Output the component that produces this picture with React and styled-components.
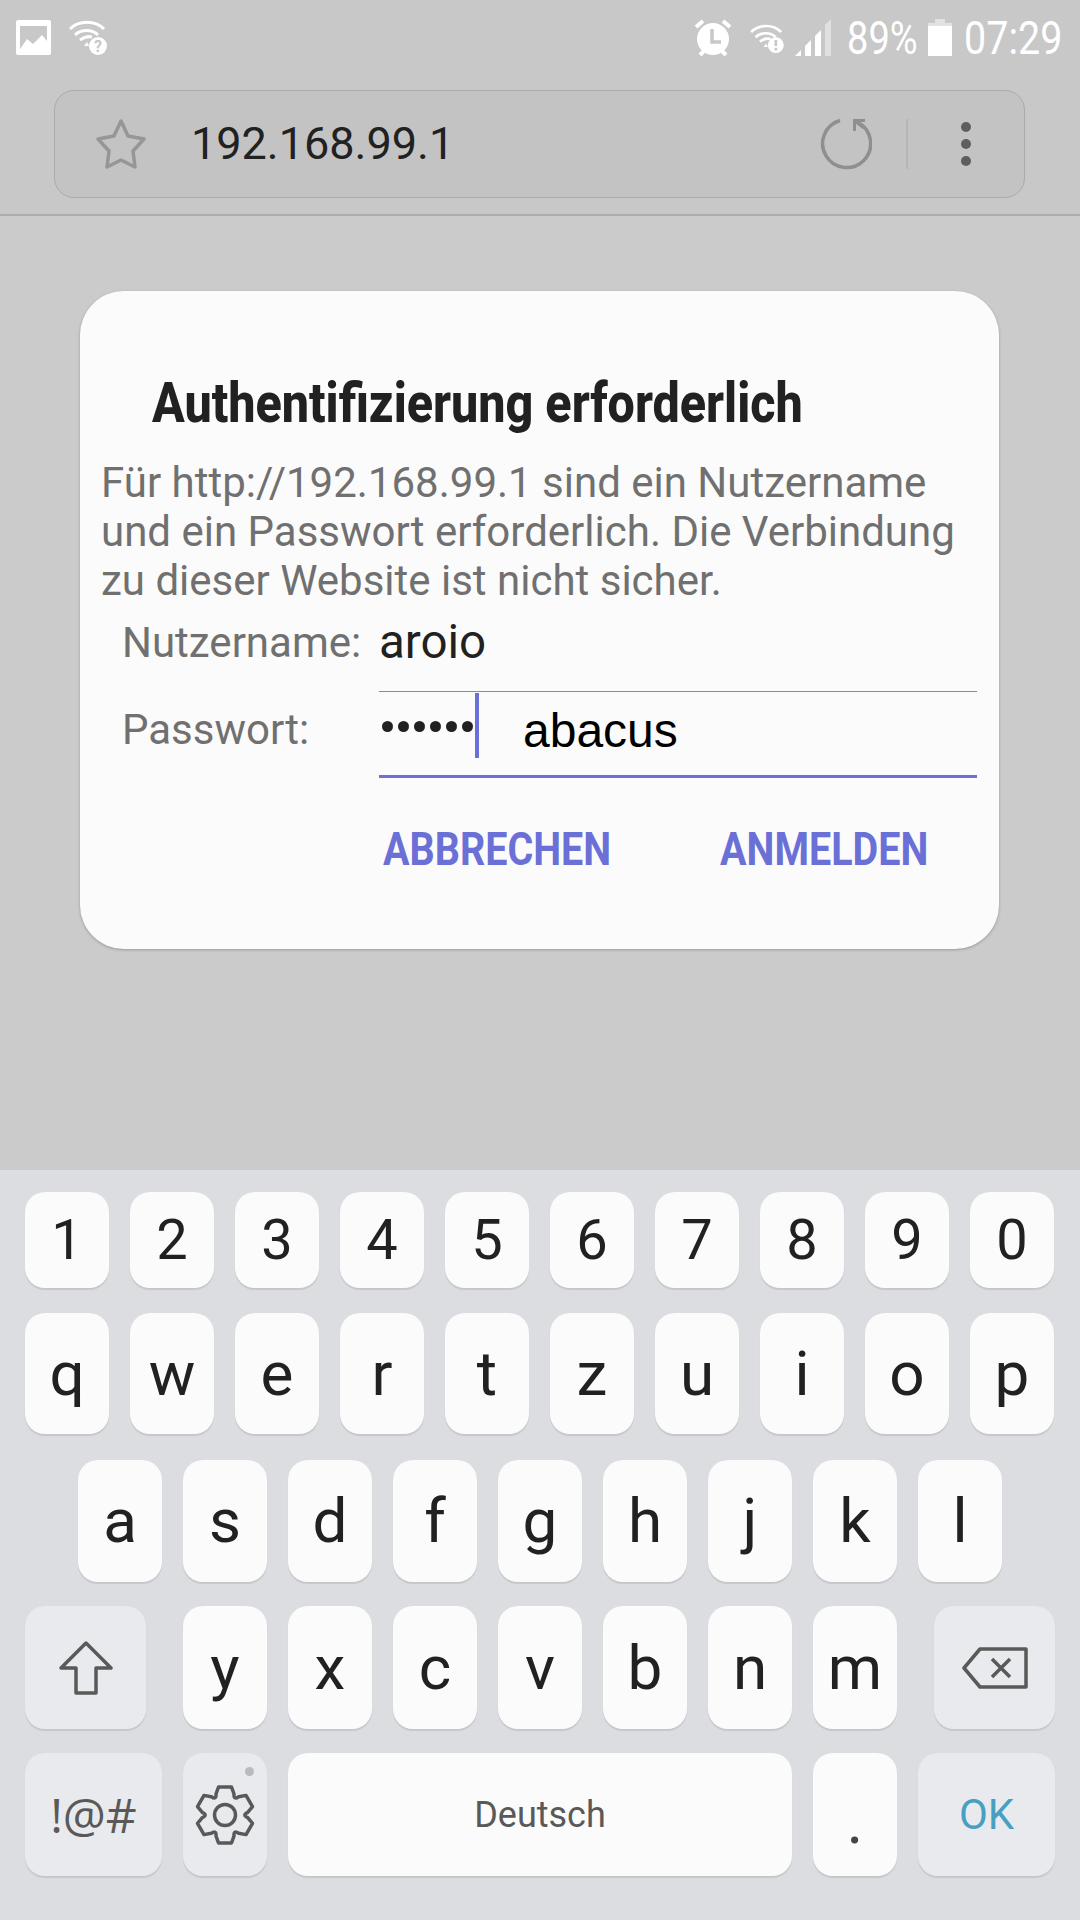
import React from "react";
import styled, { createGlobalStyle } from "styled-components";

const Global = createGlobalStyle`
  html, body { margin: 0; padding: 0; background: #cbcbcb; }
  * { box-sizing: border-box; }
`;

const Screen = styled.div`
  width: 1080px; height: 1920px; display: flex; flex-direction: column;
  background: #cbcbcb; font-family: Roboto, "Liberation Sans", sans-serif; overflow: hidden;
`;
const TopArea = styled.header`
  height: 216px; flex: none; background: #c8c8c8; border-bottom: 2px solid #adadad;
  display: flex; flex-direction: column;
`;
const StatusBar = styled.div`
  height: 90px; display: flex; align-items: flex-start; padding: 19px 20px 0 16px; color: #fff;
`;
const StatusIcon = styled.svg`
  flex: none; margin-left: ${p => p.$ml || 0}px; margin-top: ${p => p.$mt || 0}px; display: block;
`;
const Spacer = styled.div` flex: 1; `;
const StatusText = styled.span`
  flex: none; width: ${p => p.$w}px; margin-left: ${p => p.$ml}px; font-size: 47px; line-height: 38px;
  font-weight: 400; white-space: nowrap; transform: scaleX(${p => p.$sx}); transform-origin: left center; color: #fff;
`;
const UrlBar = styled.div`
  margin-left: 54px; width: 971px; height: 108px; background: #c3c3c3; border: 1.5px solid #ababab;
  border-radius: 20px; display: flex; align-items: center; padding-left: 40px;
`;
const UrlText = styled.span`
  margin-left: 44px; font-size: 45px; color: #212121; flex: 1; line-height: 50px;
`;
const Divider = styled.div`
  width: 2px; height: 50px; margin: 0 52px 0 34px; background: #b6b6b6;
`;
const MoreGap = styled.div`
  flex: none; width: 52px;
`;
const Backdrop = styled.main`
  flex: 1; display: flex; align-items: flex-start; padding: 75px 0 0 80px;
`;
const Dialog = styled.section`
  width: 919px; height: 658px; background: #fbfbfb; border-radius: 44px;
  box-shadow: 0 1px 3px rgba(0,0,0,.25); padding: 87px 22px 0 22px; display: flex; flex-direction: column;
`;
const Title = styled.h1`
  margin: 0 0 0 50px; font-size: 56px; line-height: 50px; font-weight: 800; color: #212121;
  white-space: nowrap; transform: scaleX(.865); transform-origin: left center;
`;
const Message = styled.p`
  margin: 30px 0 0 -1px; font-size: 42px; line-height: 49px; color: #707070; white-space: nowrap;
`;
const FieldRow = styled.div`
  display: grid; grid-template-columns: 277px 1fr; height: ${p => p.$h}px; align-items: start;
`;
const FieldLabel = styled.span`
  padding-left: 20px; font-size: 42px; line-height: 48px; color: #707070; margin-top: ${p => p.$mt}px; white-space: nowrap;
`;
const FieldInput = styled.div`
  height: 100%; border-bottom: ${p => p.$focus ? "3px solid #6a70d6" : "1px solid #8c8c8c"};
  display: flex; align-items: flex-start; font-size: 47.5px; color: #212121;
`;
const FieldValue = styled.span`
  margin-top: 11px; line-height: 52px;
`;
const Dots = styled.div`
  display: flex; gap: 5px; margin: 29px 0 0 3px; width: 93px;
`;
const Dot = styled.i`
  width: 11px; height: 11px; border-radius: 50%; background: #212121; display: block;
`;
const Caret = styled.div`
  width: 4px; height: 65px; background: #6a70d6; margin-top: 1px; flex: none;
`;
const Hint = styled.span`
  margin: 11px 0 0 44px; font-family: "Liberation Sans", Arial, sans-serif; font-size: 48px; line-height: 56px; color: #000;
`;
const Actions = styled.div`
  display: flex; margin-top: 46px; padding-left: 281px;
`;
const Action = styled.button`
  width: ${p => p.$w}px; flex: none; padding: 0; border: 0; background: none; text-align: left; font-family: inherit;
  font-size: 47px; line-height: 50px; font-weight: 700; color: #6a70d6; white-space: nowrap;
  transform: scaleX(.84); transform-origin: left center;
`;
const Keyboard = styled.section`
  height: 750px; flex: none; background: #dcdde1; padding: 22px 25px 0; display: flex; flex-direction: column;
`;
const Row = styled.div`
  display: flex; gap: 21px; height: ${p => p.$h}px; margin-bottom: ${p => p.$mb}px; padding-left: ${p => p.$pl || 0}px;
`;
const Key = styled.div`
  flex: none; width: ${p => p.$w || 84}px; height: 100%; border-radius: 20px; display: flex; align-items: center;
  justify-content: center; position: relative; background: ${p => p.$special ? "#e9eaee" : "#fbfbfb"};
  box-shadow: 0 1.5px 1px rgba(0,0,0,.1); color: #212121; font-size: ${p => p.$fs || 62}px; line-height: 1;
  margin-left: ${p => p.$ml || 0}px;
`;
const KeyLabel = styled.span`
  font-size: ${p => p.$fs}px; color: ${p => p.$color}; padding-top: ${p => p.$pt || 0}px; font-weight: 400;
  font-family: ${p => p.$font || "inherit"};
`;
const Badge = styled.i`
  position: absolute; top: 14px; right: 13px; width: 9px; height: 9px; border-radius: 50%; background: #b9babd;
`;
const PlainIcon = styled.svg`
  flex: none; display: block;
`;

const gear = (() => {
  const at = (deg, r, d) => {
    const a = deg * Math.PI / 180;
    return `${(30 + r * Math.cos(a) - d * Math.sin(a)).toFixed(1)} ${(30 + r * Math.sin(a) + d * Math.cos(a)).toFixed(1)}`;
  };
  let out = "";
  for (let i = 0; i < 6; i++) {
    const deg = i * 60 - 90;
    out += `${i ? "L" : "M"}${at(deg, 21, -9)} L${at(deg, 28, -6.5)} L${at(deg, 28, 6.5)} L${at(deg, 21, 9)} Q${at(deg + 30, 17, 0)} ${at(deg + 60, 21, -9)} `;
  }
  return out + "Z";
})();

const ImageIcon = () => (
  <StatusIcon width="35" height="35" viewBox="0 0 35 35" $mt="1">
    <path fillRule="evenodd" fill="#fff" d="M2 0h31a2 2 0 0 1 2 2v31a2 2 0 0 1-2 2H2a2 2 0 0 1-2-2V2a2 2 0 0 1 2-2Zm2 6v23l7-10 6 5 9-9 5 6V6Z" />
    <path fill="#fff" d="M4 4h27v2H4z" />
  </StatusIcon>
);
const WifiArcs = () => (
  <g fill="none" stroke="#fff" strokeWidth="3" strokeLinecap="butt">
    <path d="M1 9C10 0 26 0 35 9" />
    <path d="M6 15c6-6 17-6 23 0" />
    <path d="M11 20c4-3 8-4 12-3" />
    <path d="M15 26l3-4 2 4Z" fill="#fff" stroke="none" />
  </g>
);
const WifiQ = () => (
  <StatusIcon width="38" height="36" viewBox="0 0 38 36" $ml="18" $mt="1">
    <WifiArcs />
    <circle cx="29" cy="26" r="9" fill="#fff" />
    <text x="29" y="32" textAnchor="middle" fontSize="16" fontWeight="700" fontFamily="Roboto" fill="#c8c8c8">?</text>
  </StatusIcon>
);
const AlarmIcon = () => (
  <StatusIcon width="38" height="38" viewBox="0 0 38 38">
    <circle cx="19" cy="20" r="16" fill="#fff" />
    <path d="M2 8l7-6M36 8l-7-6M6 36l4-4M32 36l-4-4" stroke="#fff" strokeWidth="4" />
    <path d="M18 10v13h9" fill="none" stroke="#c8c8c8" strokeWidth="3.5" />
  </StatusIcon>
);
const WifiAlert = () => (
  <StatusIcon width="34" height="30" viewBox="0 0 38 34" $ml="18" $mt="5">
    <WifiArcs />
    <circle cx="29" cy="24" r="9" fill="#fff" />
    <path d="M29 18v7M29 27v3" stroke="#c8c8c8" strokeWidth="3" />
  </StatusIcon>
);
const SignalIcon = () => (
  <StatusIcon width="37" height="37" viewBox="0 0 37 37" $ml="11">
    <path d="M0 37l6-6v6Z" fill="#fff" />
    <path d="M10 37V27l6-6v16Z" fill="#fff" />
    <path d="M20 37V17l6-6v26Z" fill="#fff" />
    <path d="M30 37V6l6-6v37Z" fill="#e0e0e0" />
  </StatusIcon>
);
const BatteryIcon = () => (
  <StatusIcon width="24" height="37" viewBox="0 0 24 37" $ml="10">
    <path d="M7 0h10v4H7z" fill="#e2e2e2" />
    <path d="M0 4h24v3H0z" fill="#e2e2e2" />
    <path d="M0 7h24v30H0z" fill="#fff" />
  </StatusIcon>
);
const StarIcon = () => (
  <PlainIcon width="52" height="52" viewBox="0 0 52 52">
    <path d="M26 3l7 15 16 3-11 12 2 16-14-7-14 7 2-16L3 21l16-3Z" fill="none" stroke="#969696" strokeWidth="3.5" strokeLinejoin="round" />
  </PlainIcon>
);
const ReloadIcon = () => (
  <PlainIcon width="52" height="52" viewBox="0 0 52 52">
    <path d="M20 2.5A24 24 0 1 0 39 5" fill="none" stroke="#8f8f8f" strokeWidth="3.5" />
    <path d="M33 1h12v3h-9v9h-3Z" fill="#8f8f8f" />
    <path d="M35 3l9 7" stroke="#8f8f8f" strokeWidth="3" />
  </PlainIcon>
);
const MoreIcon = () => (
  <PlainIcon width="12" height="46" viewBox="0 0 12 46">
    <circle cx="6" cy="6" r="5" fill="#5e5e5e" />
    <circle cx="6" cy="23" r="5" fill="#5e5e5e" />
    <circle cx="6" cy="40" r="5" fill="#5e5e5e" />
  </PlainIcon>
);
const ShiftIcon = () => (
  <PlainIcon width="54" height="54" viewBox="0 0 54 54">
    <path d="M27 2L52 27H37V52H17V27H2Z" fill="none" stroke="#595959" strokeWidth="3.5" strokeLinejoin="round" />
  </PlainIcon>
);
const BackspaceIcon = () => (
  <PlainIcon width="66" height="42" viewBox="0 0 66 42">
    <path d="M18 2H64V40H18L2 21Z" fill="none" stroke="#595959" strokeWidth="3.5" strokeLinejoin="round" />
    <path d="M30 12l18 18M48 12L30 30" stroke="#595959" strokeWidth="3.5" />
  </PlainIcon>
);
const GearIcon = () => (
  <PlainIcon width="60" height="60" viewBox="0 0 60 60">
    <path d={gear} fill="none" stroke="#595959" strokeWidth="3.5" strokeLinejoin="round" />
    <circle cx="30" cy="30" r="10.5" fill="none" stroke="#595959" strokeWidth="3.5" />
  </PlainIcon>
);

const rows = {
  digits: "1234567890".split(""),
  top: "qwertzuiop".split(""),
  mid: "asdfghjkl".split(""),
  low: "yxcvbnm".split(""),
};

export default function App() {
  return (
    <Screen>
      <Global />
      <TopArea>
        <StatusBar>
          <ImageIcon />
          <WifiQ />
          <Spacer />
          <AlarmIcon />
          <WifiAlert />
          <SignalIcon />
          <StatusText $w={71} $ml={15} $sx={.81}>89%</StatusText>
          <BatteryIcon />
          <StatusText $w={96} $ml={12} $sx={.84}>07:29</StatusText>
        </StatusBar>
        <UrlBar>
          <StarIcon />
          <UrlText>192.168.99.1</UrlText>
          <ReloadIcon />
          <Divider />
          <MoreIcon />
          <MoreGap />
        </UrlBar>
      </TopArea>
      <Backdrop>
        <Dialog>
          <Title>Authentifizierung erforderlich</Title>
          <Message>
            Für http://192.168.99.1 sind ein Nutzername<br />
            und ein Passwort erforderlich. Die Verbindung<br />
            zu dieser Website ist nicht sicher.
          </Message>
          <FieldRow $h={87}>
            <FieldLabel $mt={14}>Nutzername:</FieldLabel>
            <FieldInput><FieldValue>aroio</FieldValue></FieldInput>
          </FieldRow>
          <FieldRow $h={86}>
            <FieldLabel $mt={14}>Passwort:</FieldLabel>
            <FieldInput $focus>
              <Dots>{[0, 1, 2, 3, 4, 5].map(i => <Dot key={i} />)}</Dots>
              <Caret />
              <Hint>abacus</Hint>
            </FieldInput>
          </FieldRow>
          <Actions>
            <Action $w={337}>ABBRECHEN</Action>
            <Action $w={210}>ANMELDEN</Action>
          </Actions>
        </Dialog>
      </Backdrop>
      <Keyboard>
        <Row $h={96} $mb={25}>{rows.digits.map(k => <Key key={k} $fs={56}>{k}</Key>)}</Row>
        <Row $h={121} $mb={26}>{rows.top.map(k => <Key key={k}>{k}</Key>)}</Row>
        <Row $h={122} $mb={24} $pl={53}>{rows.mid.map(k => <Key key={k}>{k}</Key>)}</Row>
        <Row $h={123} $mb={24}>
          <Key $special $w={121}><ShiftIcon /></Key>
          <Row $h={123} $mb={0} $pl={16}>{rows.low.map(k => <Key key={k}>{k}</Key>)}</Row>
          <Key $special $w={121} $ml={16}><BackspaceIcon /></Key>
        </Row>
        <Row $h={123} $mb={0}>
          <Key $special $w={137}><KeyLabel $fs={48} $color="#595959" $font="'Open Sans', sans-serif">!@#</KeyLabel></Key>
          <Key $special><GearIcon /><Badge /></Key>
          <Key $w={504}><KeyLabel $fs={36} $color="#595959">Deutsch</KeyLabel></Key>
          <Key><KeyLabel $fs={64} $color="#444" $pt={14}>.</KeyLabel></Key>
          <Key $special $w={137}><KeyLabel $fs={42} $color="#47a0c2">OK</KeyLabel></Key>
        </Row>
      </Keyboard>
    </Screen>
  );
}
